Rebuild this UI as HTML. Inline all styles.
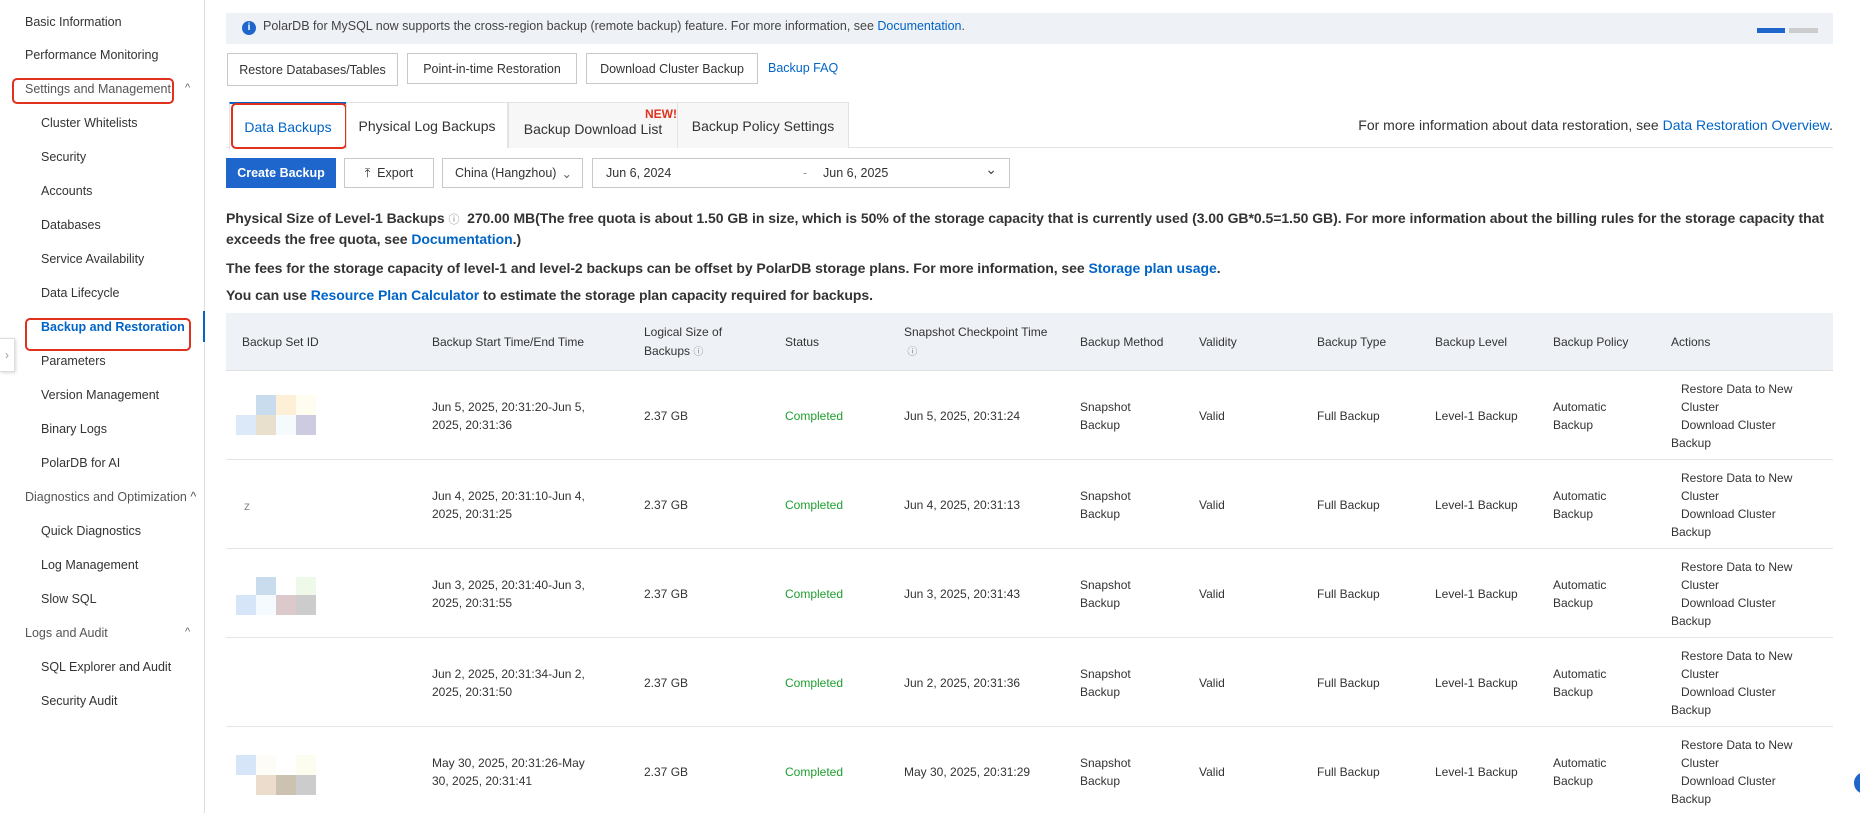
<!DOCTYPE html>
<html><head><meta charset="utf-8"><style>
*{box-sizing:border-box;margin:0;padding:0}
body{width:1860px;height:813px;overflow:hidden;background:#fff;font-family:"Liberation Sans",sans-serif;color:#333;position:relative;font-size:13px}
.a{position:absolute;white-space:nowrap}
.side{position:absolute;left:0;top:0;width:205px;height:813px;border-right:1px solid #ddd;background:#fff}
.side .a{font-size:12.5px;color:#333}
.red{position:absolute;border:2px solid #e0301e;border-radius:5px}
.btn{position:absolute;border:1px solid #c8c8c8;background:#fff;font-size:12.5px;color:#333;display:flex;align-items:center;justify-content:center}
.lnk{color:#0064c8}
.tab{position:absolute;top:102px;height:46px;border:1px solid #e3e3e3;border-bottom:none;background:#f7f7f7;font-size:14px;display:flex;align-items:center;justify-content:center;color:#333}
.bt{font-weight:bold;font-size:14px;color:#333;letter-spacing:-0.05px}
.th{position:absolute;font-size:12px;color:#333;line-height:19px}
.td{position:absolute;font-size:12px;color:#333;line-height:18px}
.row{position:absolute;left:226px;width:1607px;height:89px;border-bottom:1px solid #e5e5e5}
.px{position:absolute;width:20px;height:20px}
</style></head><body>
<div class="side">
<div class="a" style="left:25px;top:15px">Basic Information</div>
<div class="a" style="left:25px;top:48px">Performance Monitoring</div>
<div class="a" style="left:25px;top:82px;color:#555">Settings and Management</div>
<div class="a" style="left:185px;top:82px;font-size:11px;color:#666">^</div>
<div class="red" style="left:12px;top:78px;width:162px;height:26px"></div>
<div class="a" style="left:41px;top:116px">Cluster Whitelists</div>
<div class="a" style="left:41px;top:150px">Security</div>
<div class="a" style="left:41px;top:184px">Accounts</div>
<div class="a" style="left:41px;top:218px">Databases</div>
<div class="a" style="left:41px;top:252px">Service Availability</div>
<div class="a" style="left:41px;top:286px">Data Lifecycle</div>
<div class="a" style="left:41px;top:320px;color:#0064c8;font-weight:bold">Backup and Restoration</div>
<div class="red" style="left:25px;top:318px;width:166px;height:33px"></div>
<div style="position:absolute;left:203px;top:311px;width:2px;height:31px;background:#0064c8"></div>
<div class="a" style="left:41px;top:354px">Parameters</div>
<div class="a" style="left:41px;top:388px">Version Management</div>
<div class="a" style="left:41px;top:422px">Binary Logs</div>
<div class="a" style="left:41px;top:456px">PolarDB for AI</div>
<div class="a" style="left:25px;top:490px;color:#555">Diagnostics and Optimization ^</div>
<div class="a" style="left:41px;top:524px">Quick Diagnostics</div>
<div class="a" style="left:41px;top:558px">Log Management</div>
<div class="a" style="left:41px;top:592px">Slow SQL</div>
<div class="a" style="left:25px;top:626px;color:#555">Logs and Audit</div>
<div class="a" style="left:185px;top:626px;font-size:11px;color:#666">^</div>
<div class="a" style="left:41px;top:660px">SQL Explorer and Audit</div>
<div class="a" style="left:41px;top:694px">Security Audit</div>
</div>
<div style="position:absolute;left:0;top:338px;width:15px;height:34px;border:1px solid #ddd;border-left:none;background:#fff;box-shadow:1px 1px 3px rgba(0,0,0,.15);color:#999;font-size:12px;text-align:center;line-height:32px">›</div>

<div style="position:absolute;left:226px;top:13px;width:1607px;height:31px;background:#eef1f6"></div>
<div style="position:absolute;left:242px;top:21px;width:14px;height:14px;border-radius:50%;background:#1f66cc;color:#fff;font-size:10px;font-weight:bold;text-align:center;line-height:14px">i</div>
<div class="a" style="left:263px;top:19px;font-size:12.5px;color:#444">PolarDB for MySQL now supports the cross-region backup (remote backup) feature. For more information, see <span class="lnk">Documentation</span>.</div>
<div style="position:absolute;left:1757px;top:28px;width:28px;height:5px;background:#1f66cc"></div>
<div style="position:absolute;left:1789px;top:28px;width:29px;height:5px;background:#ccc"></div>

<div class="btn" style="left:227px;top:53px;width:171px;height:33px">Restore Databases/Tables</div>
<div class="btn" style="left:407px;top:53px;width:170px;height:31px">Point-in-time Restoration</div>
<div class="btn" style="left:586px;top:53px;width:172px;height:31px">Download Cluster Backup</div>
<div class="a lnk" style="left:768px;top:61px;font-size:12.5px">Backup FAQ</div>

<div style="position:absolute;left:226px;top:147px;width:1607px;height:1px;background:#e3e3e3"></div>
<div class="tab" style="left:229px;width:118px;background:#fff;color:#0064c8;border-top:2px solid #0064c8;height:47px">Data Backups</div>
<div class="red" style="left:231px;top:103px;width:116px;height:46px"></div>
<div class="tab" style="left:346px;width:162px;background:#fff">Physical Log Backups</div>
<div class="tab" style="left:508px;width:170px;padding-top:6px">Backup Download List</div>
<div class="a" style="left:645px;top:107px;color:#e0301e;font-weight:bold;font-size:12px">NEW!</div>
<div class="tab" style="left:677px;width:172px">Backup Policy Settings</div>
<div class="a" style="right:27px;top:117px;font-size:14px;color:#333">For more information about data restoration, see <span class="lnk">Data Restoration Overview</span>.</div>

<div class="btn" style="left:226px;top:158px;width:110px;height:30px;background:#1f66cc;border-color:#1f66cc;color:#fff;font-weight:bold">Create Backup</div>
<div class="btn" style="left:344px;top:158px;width:90px;height:30px">⤒&nbsp; Export</div>
<div class="btn" style="left:442px;top:158px;width:141px;height:30px;justify-content:flex-start;padding-left:12px">China (Hangzhou)<span style="position:absolute;right:10px;color:#666">⌄</span></div>
<div class="btn" style="left:592px;top:158px;width:418px;height:30px;justify-content:flex-start;padding-left:13px">Jun 6, 2024<span style="position:absolute;left:210px;color:#999">-</span><span style="position:absolute;left:230px">Jun 6, 2025</span><span style="position:absolute;right:12px;color:#444;font-size:14px;top:2px">⌄</span></div>

<div class="a bt" style="left:226px;top:210px">Physical Size of Level-1 Backups <span style="font-weight:normal;color:#888;font-size:11px">ⓘ</span>&nbsp; 270.00 MB(The free quota is about 1.50 GB in size, which is 50% of the storage capacity that is currently used (3.00 GB*0.5=1.50 GB). For more information about the billing rules for the storage capacity that</div>
<div class="a bt" style="left:226px;top:231px">exceeds the free quota, see <span class="lnk">Documentation</span>.)</div>
<div class="a bt" style="left:226px;top:260px">The fees for the storage capacity of level-1 and level-2 backups can be offset by PolarDB storage plans. For more information, see <span class="lnk">Storage plan usage</span>.</div>
<div class="a bt" style="left:226px;top:287px">You can use <span class="lnk">Resource Plan Calculator</span> to estimate the storage plan capacity required for backups.</div>

<div style="position:absolute;left:226px;top:313px;width:1607px;height:58px;background:#eef1f6;border-bottom:1px solid #e0e0e0"></div>
<div class="th" style="left:242px;top:333px">Backup Set ID</div>
<div class="th" style="left:432px;top:333px">Backup Start Time/End Time</div>
<div class="th" style="left:644px;top:323px">Logical Size of<br>Backups <span style="color:#888;font-size:10px">ⓘ</span></div>
<div class="th" style="left:785px;top:333px">Status</div>
<div class="th" style="left:904px;top:323px">Snapshot Checkpoint Time<br>&nbsp;<span style="color:#888;font-size:10px">ⓘ</span></div>
<div class="th" style="left:1080px;top:333px">Backup Method</div>
<div class="th" style="left:1199px;top:333px">Validity</div>
<div class="th" style="left:1317px;top:333px">Backup Type</div>
<div class="th" style="left:1435px;top:333px">Backup Level</div>
<div class="th" style="left:1553px;top:333px">Backup Policy</div>
<div class="th" style="left:1671px;top:333px">Actions</div>

<div class="row" style="top:371px"></div>
<div class="row" style="top:460px"></div>
<div class="row" style="top:549px"></div>
<div class="row" style="top:638px"></div>

<div class="px" style="left:256px;top:395px;background:#c9dcee"></div><div class="px" style="left:276px;top:395px;background:#fdf0d6"></div><div class="px" style="left:296px;top:395px;background:#fefdf0"></div>
<div class="px" style="left:236px;top:415px;background:#dbe9f8"></div><div class="px" style="left:256px;top:415px;background:#e9dfcd"></div><div class="px" style="left:276px;top:415px;background:#f5fafc"></div><div class="px" style="left:296px;top:415px;background:#cccbe0"></div>
<div class="td" style="left:244px;top:497px;color:#888">z</div>
<div class="px" style="left:256px;top:577px;background:#c9dcee"></div><div class="px" style="left:296px;top:577px;background:#eef9ea"></div>
<div class="px" style="left:236px;top:595px;background:#d6e6f8"></div><div class="px" style="left:256px;top:595px;background:#f4fafd"></div><div class="px" style="left:276px;top:595px;background:#dcc9cb"></div><div class="px" style="left:296px;top:595px;background:#cccccc"></div>
<div class="px" style="left:236px;top:755px;background:#d6e6f8"></div><div class="px" style="left:256px;top:755px;background:#fdfcf6"></div><div class="px" style="left:296px;top:755px;background:#fcfdee"></div>
<div class="px" style="left:256px;top:775px;background:#ecdccb"></div><div class="px" style="left:276px;top:775px;background:#cbc2b2"></div><div class="px" style="left:296px;top:775px;background:#cccccc"></div>

<div class="td" style="left:432px;top:398px">Jun 5, 2025, 20:31:20-Jun 5,<br>2025, 20:31:36</div>
<div class="td" style="left:432px;top:487px">Jun 4, 2025, 20:31:10-Jun 4,<br>2025, 20:31:25</div>
<div class="td" style="left:432px;top:576px">Jun 3, 2025, 20:31:40-Jun 3,<br>2025, 20:31:55</div>
<div class="td" style="left:432px;top:665px">Jun 2, 2025, 20:31:34-Jun 2,<br>2025, 20:31:50</div>
<div class="td" style="left:432px;top:754px">May 30, 2025, 20:31:26-May<br>30, 2025, 20:31:41</div>

<div class="td" style="left:644px;top:407px">2.37 GB</div><div class="td" style="left:644px;top:496px">2.37 GB</div><div class="td" style="left:644px;top:585px">2.37 GB</div><div class="td" style="left:644px;top:674px">2.37 GB</div><div class="td" style="left:644px;top:763px">2.37 GB</div>
<div class="td" style="left:785px;top:407px;color:#1e9e2e">Completed</div><div class="td" style="left:785px;top:496px;color:#1e9e2e">Completed</div><div class="td" style="left:785px;top:585px;color:#1e9e2e">Completed</div><div class="td" style="left:785px;top:674px;color:#1e9e2e">Completed</div><div class="td" style="left:785px;top:763px;color:#1e9e2e">Completed</div>
<div class="td" style="left:904px;top:407px">Jun 5, 2025, 20:31:24</div><div class="td" style="left:904px;top:496px">Jun 4, 2025, 20:31:13</div><div class="td" style="left:904px;top:585px">Jun 3, 2025, 20:31:43</div><div class="td" style="left:904px;top:674px">Jun 2, 2025, 20:31:36</div><div class="td" style="left:904px;top:763px">May 30, 2025, 20:31:29</div>

<div class="td" style="left:1080px;top:398px">Snapshot<br>Backup</div><div class="td" style="left:1080px;top:487px">Snapshot<br>Backup</div><div class="td" style="left:1080px;top:576px">Snapshot<br>Backup</div><div class="td" style="left:1080px;top:665px">Snapshot<br>Backup</div><div class="td" style="left:1080px;top:754px">Snapshot<br>Backup</div>
<div class="td" style="left:1199px;top:407px">Valid</div><div class="td" style="left:1199px;top:496px">Valid</div><div class="td" style="left:1199px;top:585px">Valid</div><div class="td" style="left:1199px;top:674px">Valid</div><div class="td" style="left:1199px;top:763px">Valid</div>
<div class="td" style="left:1317px;top:407px">Full Backup</div><div class="td" style="left:1317px;top:496px">Full Backup</div><div class="td" style="left:1317px;top:585px">Full Backup</div><div class="td" style="left:1317px;top:674px">Full Backup</div><div class="td" style="left:1317px;top:763px">Full Backup</div>
<div class="td" style="left:1435px;top:407px">Level-1 Backup</div><div class="td" style="left:1435px;top:496px">Level-1 Backup</div><div class="td" style="left:1435px;top:585px">Level-1 Backup</div><div class="td" style="left:1435px;top:674px">Level-1 Backup</div><div class="td" style="left:1435px;top:763px">Level-1 Backup</div>
<div class="td" style="left:1553px;top:398px">Automatic<br>Backup</div><div class="td" style="left:1553px;top:487px">Automatic<br>Backup</div><div class="td" style="left:1553px;top:576px">Automatic<br>Backup</div><div class="td" style="left:1553px;top:665px">Automatic<br>Backup</div><div class="td" style="left:1553px;top:754px">Automatic<br>Backup</div>

<div class="td lnk" style="left:1671px;top:380px">&nbsp;&nbsp;&nbsp;Restore Data to New<br>&nbsp;&nbsp;&nbsp;Cluster<br>&nbsp;&nbsp;&nbsp;Download Cluster<br>Backup</div>
<div class="td lnk" style="left:1671px;top:469px">&nbsp;&nbsp;&nbsp;Restore Data to New<br>&nbsp;&nbsp;&nbsp;Cluster<br>&nbsp;&nbsp;&nbsp;Download Cluster<br>Backup</div>
<div class="td lnk" style="left:1671px;top:558px">&nbsp;&nbsp;&nbsp;Restore Data to New<br>&nbsp;&nbsp;&nbsp;Cluster<br>&nbsp;&nbsp;&nbsp;Download Cluster<br>Backup</div>
<div class="td lnk" style="left:1671px;top:647px">&nbsp;&nbsp;&nbsp;Restore Data to New<br>&nbsp;&nbsp;&nbsp;Cluster<br>&nbsp;&nbsp;&nbsp;Download Cluster<br>Backup</div>
<div class="td lnk" style="left:1671px;top:736px">&nbsp;&nbsp;&nbsp;Restore Data to New<br>&nbsp;&nbsp;&nbsp;Cluster<br>&nbsp;&nbsp;&nbsp;Download Cluster<br>Backup</div>

<div style="position:absolute;left:1854px;top:772px;width:22px;height:22px;border-radius:50%;background:#1f66cc"></div>
</body></html>
